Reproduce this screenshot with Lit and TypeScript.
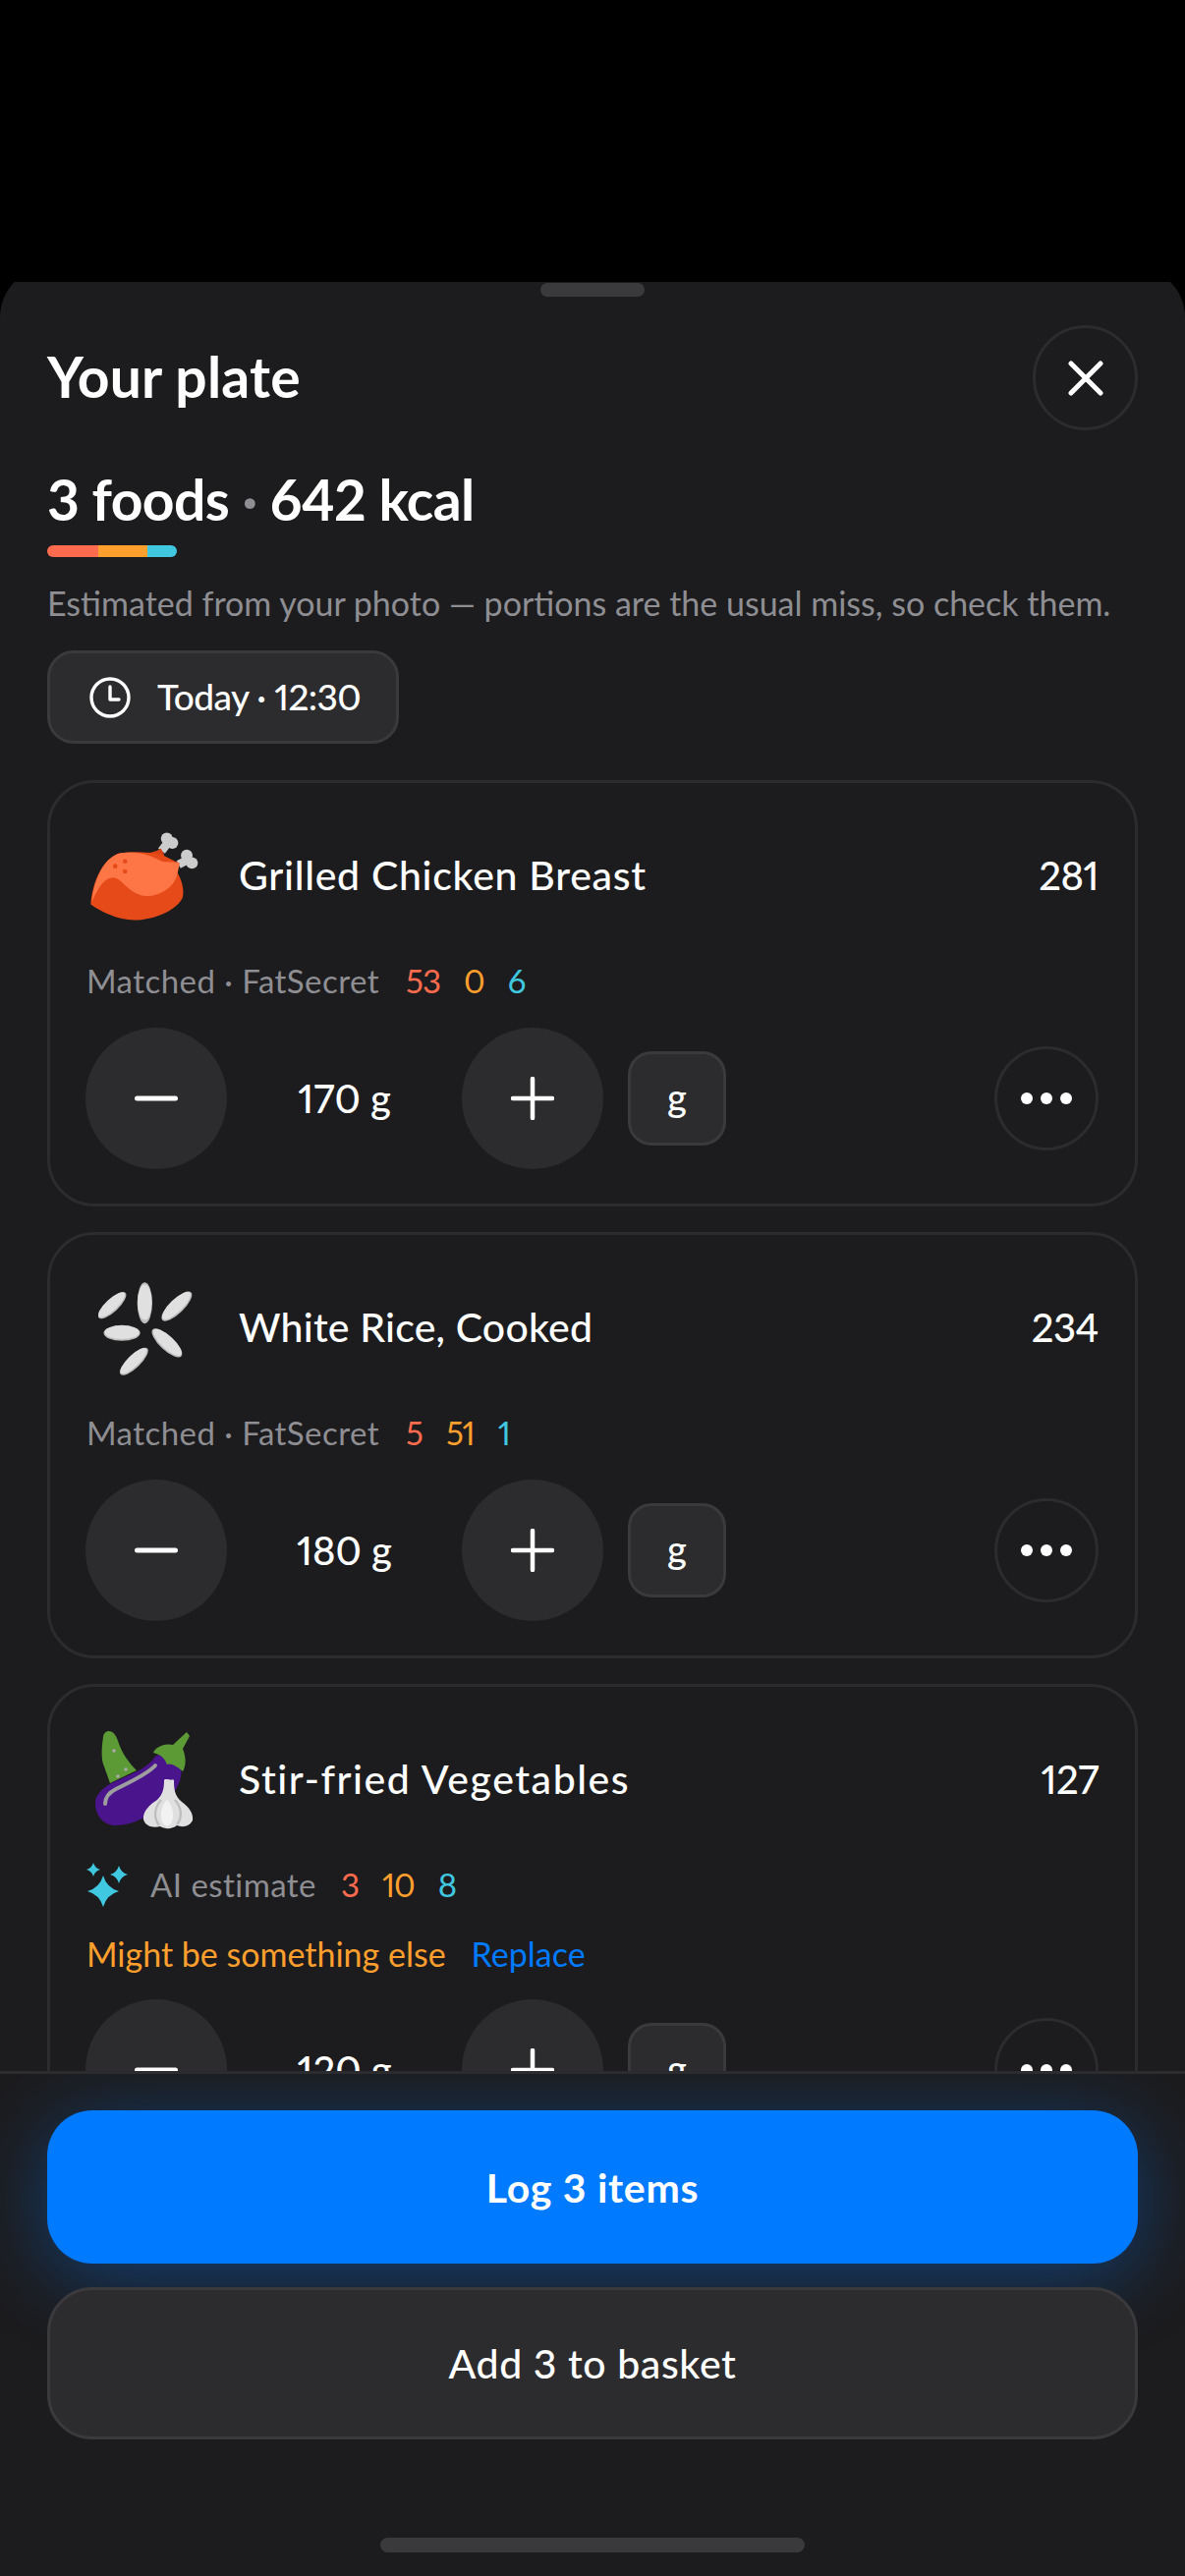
import { LitElement, html, css, svg } from "lit";
import { customElement } from "lit/decorators.js";

const chicken = html`<svg class="ic-chicken" viewBox="150 168 340 276" aria-hidden="true">
  <path fill="none" stroke="#ccc" stroke-width="26" d="M397 198L374 228"/>
  <circle cx="390" cy="190" r="18" fill="#ccc"/><circle cx="407" cy="204" r="18" fill="#ccc"/>
  <path fill="#D84315" d="M310 236 C335 235 355 232 372 220 L382 240 L376 262Z"/>
  <path fill="none" stroke="#ccc" stroke-width="26" d="M456 254L426 270"/>
  <circle cx="451" cy="242" r="18" fill="#ccc"/><circle cx="467" cy="265" r="18" fill="#ccc"/>
  <path fill="#E64A19" d="M157 392 C160 340 185 255 245 235 C290 228 340 232 375 240 L425 265 L420 290 C435 315 445 345 438 372 C420 410 350 440 290 440 C240 440 190 415 157 392Z"/>
  <path fill="#FF7646" d="M160 385 C180 340 200 310 225 310 C250 310 265 348 310 364 C350 374 410 350 422 300 L430 264 L376 261 C330 232 280 230 245 235 C190 252 165 330 160 385Z"/>
  <circle cx="232" cy="275" r="7" fill="#E64A19"/><circle cx="262" cy="260" r="7" fill="#E64A19"/><circle cx="262" cy="291" r="7" fill="#E64A19"/>
</svg>`;

const grains: [number, number, number, number, number][] = [
  [320, 168, 23, 63, 0], [220, 175, 56, 20, -43], [418, 178, 61, 22, -44],
  [250, 260, 56, 24, 0], [388, 290, 60, 22, 43], [287, 347, 57, 20, -44],
];
const rice = html`<svg class="ic-rice" viewBox="178 104 288 286" aria-hidden="true">
  ${grains.map(([x, y, a, b, r]) => svg`<g transform="rotate(${r} ${x} ${y})">
    <ellipse cx=${x} cy=${y} rx=${a} ry=${b} fill="#BDBDBD"/>
    <ellipse cx=${x} cy=${y - 2} rx=${a * 0.94} ry=${b * 0.86} fill="#E0E0E0"/>
  </g>`)}
</svg>`;

const veggies = html`<svg class="ic-veg" viewBox="55 40 105 104" aria-hidden="true">
  <path fill="#5C9A35" d="M65 48 C66 40 76 39 80 52 C84 65 92 75 99 82 L72 95 L66 78 C62 70 64 55 65 48Z"/>
  <circle cx="76" cy="62" r="1.8" fill="#aaa"/><circle cx="88" cy="81" r="1.8" fill="#aaa"/><circle cx="80" cy="88" r="1.8" fill="#aaa"/>
  <path fill="#4A148C" d="M57 115 C57 105 68 97 80 92 C95 85 110 80 118 68 C122 64 135 65 142 72 C148 85 143 100 130 112 C115 128 95 138 78 138 C65 138 57 128 57 115Z"/>
  <path fill="none" stroke="#9E9E9E" stroke-width="4" stroke-linecap="round" d="M118 77 C110 86 92 94 78 101 C70 105 67 110 67 116"/>
  <path fill="#5C9A35" d="M116 64 C118 58 128 54 136 56 L150 43 L153 47 L146 60 C150 70 149 78 146 83 C140 78 134 74 130 76 C128 72 127 67 116 64Z"/>
  <path fill="#E0E0E0" d="M127 92 C128 90 131 92 132 91 C134 93 136 90 137 92 C137 102 138 108 145 114 C153 120 157 126 156 133 C152 140 145 140 140 138 C135 142 128 142 123 139 C116 141 108 139 106 132 C105 124 112 117 120 112 C126 106 127 100 127 92Z"/>
  <path fill="none" stroke="#BDBDBD" stroke-width="2.2" d="M122 138 C116 130 117 120 124 112 M140 137 C146 130 145 120 138 112"/>
  <path fill="#F2F2F2" d="M126 136 C122 128 124 118 130 112 C136 118 138 128 134 136 C132 139 128 139 126 136Z"/>
</svg>`;

const star = (cx: number, cy: number, r: number) => {
  const k = r * 0.22;
  return `M${cx} ${cy - r}Q${cx + k} ${cy - k} ${cx + r} ${cy}Q${cx + k} ${cy + k} ${cx} ${cy + r}Q${cx - k} ${cy + k} ${cx - r} ${cy}Q${cx - k} ${cy - k} ${cx} ${cy - r}Z`;
};
const sparkle = html`<svg class="ic-spark" viewBox="0 0 42 46" aria-hidden="true">
  <path fill="#40C8E0" d=${star(17, 30, 16) + star(7, 8, 7) + star(33, 13, 9)}/>
</svg>`;

const minus = html`<svg class="ic-step" viewBox="0 0 44 44" aria-hidden="true"><path d="M2.5 22H41.5" stroke="#fff" stroke-width="5" stroke-linecap="round"/></svg>`;
const plus = html`<svg class="ic-step" viewBox="0 0 44 44" aria-hidden="true"><path d="M2 22H42M22 2V42" stroke="#fff" stroke-width="4.5" stroke-linecap="round"/></svg>`;
const dots = html`<svg class="ic-dots" viewBox="0 0 52 12" aria-hidden="true"><circle cx="6" cy="6" r="6" fill="#fff"/><circle cx="26" cy="6" r="6" fill="#fff"/><circle cx="46" cy="6" r="6" fill="#fff"/></svg>`;

interface Food {
  icon: unknown; name: string; track: number; kcal: number; source: string; ai?: boolean;
  p: number; c: number; f: number; qty: string; warn?: boolean;
}
const foods: Food[] = [
  { icon: chicken, name: "Grilled Chicken Breast", track: 0.7, kcal: 281, source: "Matched · FatSecret", p: 53, c: 0, f: 6, qty: "170 g" },
  { icon: rice, name: "White Rice, Cooked", track: 0.2, kcal: 234, source: "Matched · FatSecret", p: 5, c: 51, f: 1, qty: "180 g" },
  { icon: veggies, name: "Stir-fried Vegetables", track: 1.55, kcal: 127, source: "AI estimate", ai: true, p: 3, c: 10, f: 8, qty: "120 g", warn: true },
];

@customElement("app-root")
export class AppRoot extends LitElement {
  static styles = css`
    :host {
      display: flex; flex-direction: column; height: 2622px; width: 1206px;
      background: #000; overflow: hidden; color: #fff;
      font-family: "Lato", "Noto Sans", sans-serif;
      font-variant-numeric: proportional-nums;
    }
    * { box-sizing: border-box; }
    .top { flex: none; height: 287px; background: #000; }
    .clip { flex: 1; min-height: 0; overflow: hidden; display: flex; }
    .sheet {
      flex: 1; margin-top: -15px; background: #1c1c1e; border-radius: 51px 51px 0 0;
      display: flex; flex-direction: column; min-height: 0; width: 100%;
    }
    .handle-row { flex: none; height: 59px; padding-top: 16px; display: flex; justify-content: center; }
    .handle { width: 106px; height: 14px; border-radius: 7px; background: #3a3a3c; }
    .head { flex: none; display: flex; align-items: center; justify-content: space-between; padding: 0 48px; height: 107px; }
    h1 { margin: 0 0 4px; font-size: 57px; font-weight: 700; letter-spacing: 0.2px; line-height: 64px; }
    .close {
      width: 107px; height: 107px; border-radius: 50%; border: 3px solid #2c2c2e;
      display: flex; align-items: center; justify-content: center;
    }
    .close svg { width: 36px; height: 36px; display: block; }
    .summary { flex: none; margin: 38px 48px 0; font-size: 57px; font-weight: 700; line-height: 64px; letter-spacing: -0.6px; }
    .summary .sep { color: #8e8e93; }
    .macro-bar { flex: none; display: flex; width: 132px; height: 12px; border-radius: 6px; overflow: hidden; margin: 15px 48px 0; }
    .macro-bar i { display: block; height: 100%; }
    .b1 { width: 52px; background: #ff6b4f; }
    .b2 { width: 50px; background: #ff9f2d; }
    .b3 { width: 30px; background: #40c8e0; }
    .desc { flex: none; margin: 25px 48px 0; font-size: 34px; line-height: 44px; color: #8e8e93; white-space: nowrap; letter-spacing: 0; }
    .time {
      flex: none; align-self: flex-start; margin: 26px 48px 0; height: 95px; width: 358px; border-radius: 27px;
      background: #2c2c2e; border: 3px solid #3a3a3c; display: flex; align-items: center; padding-left: 40px; gap: 27px;
      font-size: 37px; font-weight: 500; white-space: nowrap; letter-spacing: -0.6px;
    }
    .time span { padding-bottom: 2px; }
    .time svg { width: 42px; height: 42px; flex: none; display: block; }
    .list { flex: 1; min-height: 0; overflow: hidden; padding: 37px 48px 0; display: flex; flex-direction: column; gap: 26px; }
    .card { flex: none; border: 3px solid #2c2c2e; border-radius: 48px; padding: 40px 37px 35px 36px; }
    .row { display: flex; align-items: center; height: 110px; }
    .ic-box { flex: none; width: 156px; display: flex; align-items: center; }
    .ic-chicken { width: 113px; height: 92px; margin-left: 3px; display: block; }
    .ic-rice { width: 96px; height: 95px; margin-left: 13px; display: block; }
    .ic-veg { width: 105px; height: 104px; margin-left: 8px; display: block; }
    .name { flex: 1; font-size: 41px; font-weight: 500; white-space: nowrap; padding-bottom: 3px; }
    .kcal { font-size: 40px; font-weight: 500; padding-bottom: 3px; letter-spacing: -0.5px; }
    .meta { display: flex; align-items: center; height: 44px; margin-top: 29px; font-size: 33px; white-space: nowrap; color: #8e8e93; }
    .ic-spark { width: 44px; height: 46px; flex: none; margin-right: 22px; display: block; }
    .src { margin-left: 1px; margin-right: 27px; letter-spacing: 0.45px; }
    .ai .src { margin-left: 0; margin-right: 25px; }
    .mac { margin-right: 24px; letter-spacing: -1px; }
    .m1 { color: #ff6b4f; } .m2 { color: #ff9f2d; } .m3 { color: #40c8e0; }
    .warn { display: flex; align-items: center; height: 44px; margin-top: 26px; margin-left: 1px; font-size: 34px; white-space: nowrap; gap: 26px; color: #ff9f2d; }
    .warn b { font-weight: 400; color: #007aff; }
    .stepper { display: flex; align-items: center; height: 144px; margin-top: 26px; }
    .warn + .stepper { margin-top: 25px; }
    .round { flex: none; width: 144px; height: 144px; border-radius: 50%; background: #2c2c2e; display: flex; align-items: center; justify-content: center; }
    .ic-step { width: 44px; height: 44px; display: block; }
    .qty { flex: none; width: 239px; text-align: center; font-size: 40px; font-weight: 500; }
    .unit {
      flex: none; width: 100px; height: 96px; margin-left: 25px; border-radius: 24px; background: #2c2c2e; border: 3px solid #3a3a3c;
      display: flex; align-items: center; justify-content: center; font-size: 38px; font-weight: 500; padding-bottom: 4px;
    }
    .more { flex: none; margin-left: auto; width: 106px; height: 106px; border-radius: 50%; border: 3px solid #2c2c2e; display: flex; align-items: center; justify-content: center; }
    .ic-dots { width: 52px; height: 12px; display: block; }
    .foot { flex: none; background: #1c1c1e; border-top: 3px solid #2c2c2e; padding: 37px 48px 24px; overflow: hidden; display: flex; flex-direction: column; }
    .btn { height: 155px; border-radius: 46px; display: flex; align-items: center; justify-content: center; font-size: 41px; white-space: nowrap; }
    .primary { height: 156px; background: #007aff; font-weight: 700; letter-spacing: 0.7px; box-shadow: 0 14px 80px rgba(0, 122, 255, 0.38); }
    .secondary { position: relative; margin-top: 24px; background: #2c2c2e; border: 3px solid #3a3a3c; font-weight: 500; letter-spacing: 0.6px; }
    .home { align-self: center; width: 432px; height: 15px; border-radius: 8px; background: #3a3a3c; margin-top: 100px; }
  `;

  private card(f: Food) {
    return html`<article class="card">
      <div class="row">
        <div class="ic-box">${f.icon}</div>
        <div class="name" style="letter-spacing:${f.track}px">${f.name}</div>
        <div class="kcal">${f.kcal}</div>
      </div>
      <div class="meta ${f.ai ? "ai" : ""}">
        ${f.ai ? sparkle : ""}
        <span class="src">${f.source}</span>
        <span class="mac m1">${f.p}</span><span class="mac m2">${f.c}</span><span class="mac m3">${f.f}</span>
      </div>
      ${f.warn ? html`<div class="warn"><span>Might be something else</span><b>Replace</b></div>` : ""}
      <div class="stepper">
        <div class="round">${minus}</div>
        <div class="qty">${f.qty}</div>
        <div class="round">${plus}</div>
        <div class="unit">g</div>
        <div class="more">${dots}</div>
      </div>
    </article>`;
  }

  render() {
    return html`
      <div class="top"></div>
      <div class="clip">
        <section class="sheet">
          <div class="handle-row"><div class="handle"></div></div>
          <div class="head">
            <h1>Your plate</h1>
            <div class="close"><svg viewBox="0 0 36 36" aria-hidden="true"><path d="M3 3L33 33M33 3L3 33" stroke="#fff" stroke-width="5" stroke-linecap="round"/></svg></div>
          </div>
          <div class="summary">3 foods <span class="sep">·</span> 642 kcal</div>
          <div class="macro-bar"><i class="b1"></i><i class="b2"></i><i class="b3"></i></div>
          <div class="desc">Estimated from your photo — portions are the usual miss, so check them.</div>
          <div class="time">
            <svg viewBox="0 0 42 42" aria-hidden="true"><circle cx="21" cy="21" r="19" fill="none" stroke="#fff" stroke-width="3.4"/><path d="M21 10V23H30" fill="none" stroke="#fff" stroke-width="3.4" stroke-linecap="round" stroke-linejoin="round"/></svg>
            <span>Today · 12:30</span>
          </div>
          <div class="list">${foods.map((f) => this.card(f))}</div>
          <div class="foot">
            <div class="btn primary">Log 3 items</div>
            <div class="btn secondary">Add 3 to basket</div>
            <div class="home"></div>
          </div>
        </section>
      </div>`;
  }
}
